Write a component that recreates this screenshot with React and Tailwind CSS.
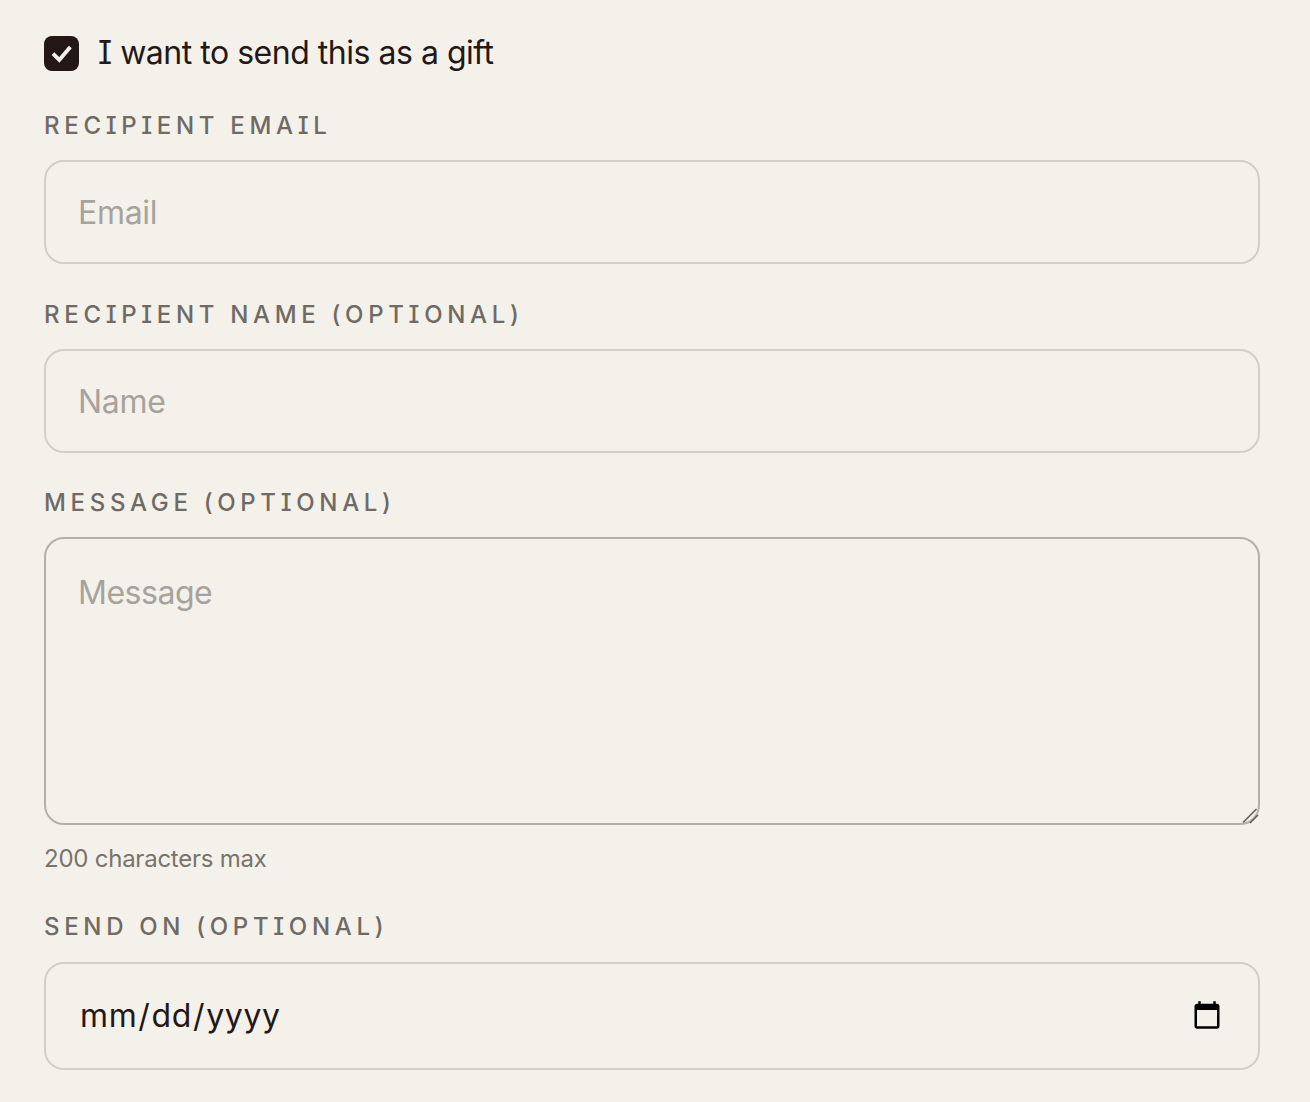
export default function App() {
  const label = "block h-[30px] text-[24px] leading-[32px] font-[450] tracking-[0.195em] text-[#6f6a64] uppercase [font-feature-settings:'ss02']";
  const field = "block w-full h-[104px] rounded-[20px] border-2 border-[#d2cfc9] bg-transparent px-[32px] text-[32px] tracking-[-0.01em] text-[#231815] outline-none placeholder:text-[#a6a29c]";
  return (
    <div className="min-h-[1102px] bg-[#f4f1eb] pl-[44px] pr-[50px] pt-[36px] font-['Inter',sans-serif] text-[#231815]">
      <label className="flex h-[36px] items-start gap-[19px]">
        <span className="flex h-[35px] w-[35px] items-center justify-center rounded-[8px] bg-[#231815]">
          <svg width="26" height="26" viewBox="0 0 24 24" fill="none" stroke="#f4f1eb" strokeWidth="3.6" strokeLinecap="square" strokeLinejoin="miter"><path d="M5 13l4.5 4.5L18.5 7" /></svg>
        </span>
        <span className="text-[32px] leading-[34px] tracking-[-0.015em] [font-feature-settings:'ss02']">I want to send this as a gift</span>
      </label>
      <div className="mt-[38px]">
        <label className={label}>Recipient Email</label>
        <input className={`${field} mt-[20px]`} placeholder="Email" />
      </div>
      <div className="mt-[35px]">
        <label className={label}>Recipient Name (optional)</label>
        <input className={`${field} mt-[20px]`} placeholder="Name" />
      </div>
      <div className="mt-[34px]">
        <label className={label}>Message (optional)</label>
        <div className="relative mt-[20px]">
          <textarea className="block h-[288px] w-full resize-none rounded-[20px] border-2 border-[#b5b1aa] bg-transparent px-[32px] py-[32px] text-[32px] leading-[44px] tracking-[-0.015em] text-[#231815] outline-none placeholder:text-[#a6a29c]" placeholder="Message" />
          <svg className="absolute bottom-0 right-0" width="20" height="20" viewBox="0 0 20 20" fill="none" strokeWidth="1.6"><path d="M3 17.5 16.5 4" stroke="#5f5f5f" /><path d="M10 18 18 10" stroke="#5f5f5f" /></svg>
        </div>
        <p className="mt-[20px] text-[24px] leading-[28px] tracking-[-0.01em] text-[#78736c]">200 characters max</p>
      </div>
      <div className="mt-[38px]">
        <label className={label}>Send on (optional)</label>
        <input type="date" className="mt-[21px] block h-[108px] w-full rounded-[20px] border-2 border-[#d2cfc9] bg-transparent px-[33px] text-[32px] tracking-[0.02em] text-[#231815] outline-none" />
      </div>
    </div>
  );
}
